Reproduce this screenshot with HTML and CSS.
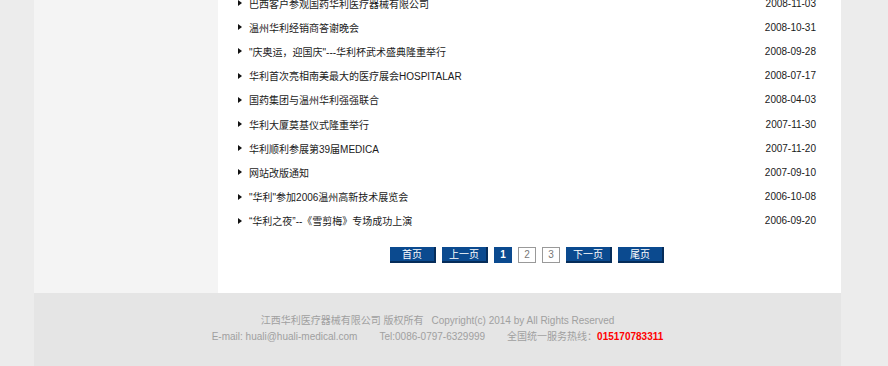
FILE: index.html
```html
<!DOCTYPE html>
<html lang="zh-CN">
  <head>
    <meta charset="UTF-8" />
    <meta name="viewport" content="width=device-width, initial-scale=1.0" />
    <title>新闻中心 - 江西华利医疗器械有限公司</title>
    <link rel="stylesheet" href="styles.css">
  </head>
  <body>
    <div class="wrap">
      <div class="main">
        <div class="side"></div>

        <div class="content">
          <ul class="news-list">
            <li><a href="#">巴西客户参观国药华利医疗器械有限公司</a><span class="date">2008-11-03</span></li>
            <li><a href="#">温州华利经销商答谢晚会</a><span class="date">2008-10-31</span></li>
            <li><a href="#">"庆奥运，迎国庆"---华利杯武术盛典隆重举行</a><span class="date">2008-09-28</span></li>
            <li><a href="#">华利首次亮相南美最大的医疗展会HOSPITALAR</a><span class="date">2008-07-17</span></li>
            <li><a href="#">国药集团与温州华利强强联合</a><span class="date">2008-04-03</span></li>
            <li><a href="#">华利大厦莫基仪式隆重举行</a><span class="date">2007-11-30</span></li>
            <li><a href="#">华利顺利参展第39届MEDICA</a><span class="date">2007-11-20</span></li>
            <li><a href="#">网站改版通知</a><span class="date">2007-09-10</span></li>
            <li><a href="#">"华利"参加2006温州高新技术展览会</a><span class="date">2006-10-08</span></li>
            <li><a href="#">“华利之夜”--《雪剪梅》专场成功上演</a><span class="date">2006-09-20</span></li>
          </ul>

          <div class="pager">
            <a href="#" class="btn">首页</a>
            <a href="#" class="btn">上一页</a>
            <a href="#" class="num current">1</a>
            <a href="#" class="num">2</a>
            <a href="#" class="num">3</a>
            <a href="#" class="btn">下一页</a>
            <a href="#" class="btn">尾页</a>
          </div>
        </div>
      </div>

      <div class="footer">
        <p>江西华利医疗器械有限公司 版权所有<span class="gap"></span>Copyright(c) 2014 by All Rights Reserved</p>
        <p>E-mail: huali@huali-medical.com<span class="gap wide"></span>Tel:0086-0797-6329999<span class="gap wide"></span>全国统一服务热线：<b class="hotline">015170783311</b></p>
      </div>
    </div>
  </body>
</html>
```

FILE: styles.css
```css
* {
  margin: 0;
  padding: 0;
  box-sizing: border-box;
}

body {
  background-color: #ececec;
  font-family: "Liberation Sans", Arial, "Noto Sans CJK SC", sans-serif;
  font-size: 10px;
  overflow: hidden;
}

a {
  text-decoration: none;
}

.wrap {
  width: 807px;
  margin-left: 34px;
}

.main {
  display: flex;
}

.side {
  width: 184px;
  background-color: #f4f4f4;
}

.content {
  flex: 1;
  background-color: #fff;
  padding: 0 25px 30px 20px;
}

/* News list */
.news-list {
  list-style: none;
  margin-top: -9px;
}

.news-list li {
  display: flex;
  justify-content: space-between;
  align-items: center;
  height: 24.2px;
}

.news-list a {
  color: #1a1a1a;
  display: flex;
  align-items: center;
}

.news-list a::before {
  content: "";
  width: 0;
  height: 0;
  border-top: 3px solid transparent;
  border-bottom: 3px solid transparent;
  border-left: 4px solid #111;
  margin-right: 7px;
}

.date {
  color: #1a1a1a;
}

/* Pagination */
.pager {
  display: flex;
  justify-content: center;
  gap: 6px;
  margin-top: 14px;
}

.pager a {
  height: 16px;
  line-height: 14px;
  text-align: center;
}

.pager .btn {
  width: 46px;
  background-color: #0b4a8f;
  color: #fff;
  border-right: 2px solid #062d5a;
  border-bottom: 2px solid #062d5a;
  line-height: 15px;
}

.pager .num {
  width: 18px;
  border: 1px solid #999;
  color: #777;
  background-color: #fff;
}

.pager .num.current {
  background-color: #0b4a8f;
  border-color: #0b4a8f;
  color: #fff;
  font-weight: bold;
}

/* Footer */
.footer {
  height: 73px;
  background-color: #e5e5e5;
  padding-top: 20px;
  text-align: center;
  color: #a0a0a0;
  line-height: 16px;
}

.gap {
  display: inline-block;
  width: 8px;
}

.gap.wide {
  width: 22px;
}

.hotline {
  color: #f00;
}
```
